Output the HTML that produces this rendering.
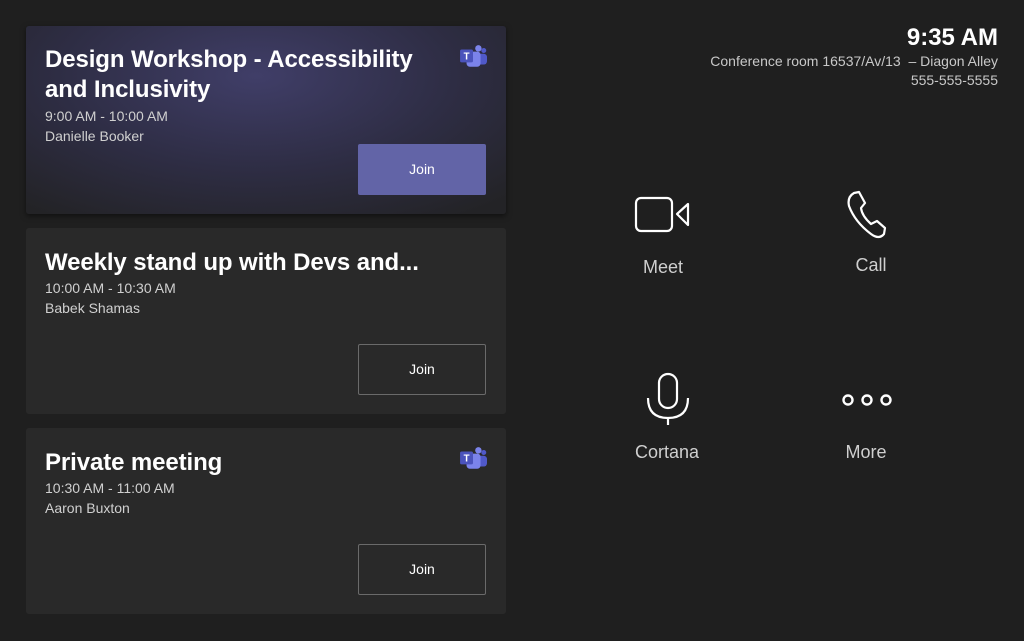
<!DOCTYPE html>
<html><head><style>
body{margin:0;width:1024px;height:641px;background:#1f1f1f;font-family:"Liberation Sans",sans-serif;color:#fff;position:relative;overflow:hidden}
.card{position:absolute;left:26px;width:480px;background:#292929;border-radius:3px}
.t{position:absolute;left:19px;font-weight:bold;font-size:24px;line-height:30px;letter-spacing:-0.1px}
.s{position:absolute;left:19px;font-size:14px;color:#d0d0d0;line-height:19px}
.btn{position:absolute;left:332px;width:128px;height:51px;border:1px solid #6a6a6a;border-radius:2px;box-sizing:border-box;font-size:14px;text-align:center;line-height:49px}
.ic{position:absolute}
.lbl{position:absolute;font-size:18px;color:#cfcfcf;text-align:center;width:120px}
.teams{position:absolute;left:433px;width:28px;height:26px}
</style></head><body>
<div class="card" style="top:26px;height:188px;background:radial-gradient(ellipse 360px 170px at 230px 50px,#403e68 0%,#2e2d44 55%,#232326 100%);box-shadow:0 2px 6px rgba(0,0,0,.5)">
 <div class="t" style="top:19px">Design Workshop - Accessibility<br>and Inclusivity</div>
 <div class="s" style="top:81px">9:00 AM - 10:00 AM</div>
 <div class="s" style="top:101px">Danielle Booker</div>
 <div class="btn" style="top:118px;background:#6264a7;border:none;line-height:51px">Join</div>
 <svg class="teams" style="top:18px" viewBox="0 0 26 24"><circle cx="18" cy="4" r="3" fill="#7b83eb"/><circle cx="23" cy="6" r="2.3" fill="#5059c9"/><rect x="16" y="9" width="10" height="10" rx="3" fill="#5059c9"/><rect x="7" y="7" width="13" height="14" rx="3" fill="#7b83eb"/><rect x="1" y="5" width="12" height="12" rx="1.5" fill="#4b53bc"/><text x="7" y="14.5" font-size="9" font-weight="bold" fill="#fff" text-anchor="middle" font-family="Liberation Sans">T</text></svg>
</div>
<div class="card" style="top:228px;height:186px">
 <div class="t" style="top:20px">Weekly stand up with Devs and...</div>
 <div class="s" style="top:51px">10:00 AM - 10:30 AM</div>
 <div class="s" style="top:71px">Babek Shamas</div>
 <div class="btn" style="top:116px">Join</div>
</div>
<div class="card" style="top:428px;height:186px">
 <div class="t" style="top:20px">Private meeting</div>
 <div class="s" style="top:51px">10:30 AM - 11:00 AM</div>
 <div class="s" style="top:71px">Aaron Buxton</div>
 <div class="btn" style="top:116px">Join</div>
 <svg class="teams" style="top:18px" viewBox="0 0 26 24"><circle cx="18" cy="4" r="3" fill="#7b83eb"/><circle cx="23" cy="6" r="2.3" fill="#5059c9"/><rect x="16" y="9" width="10" height="10" rx="3" fill="#5059c9"/><rect x="7" y="7" width="13" height="14" rx="3" fill="#7b83eb"/><rect x="1" y="5" width="12" height="12" rx="1.5" fill="#4b53bc"/><text x="7" y="14.5" font-size="9" font-weight="bold" fill="#fff" text-anchor="middle" font-family="Liberation Sans">T</text></svg>
</div>
<div style="position:absolute;right:26px;top:24px;text-align:right">
 <div style="font-size:24px;font-weight:bold;line-height:28px">9:35 AM</div>
 <div style="font-size:14px;color:#c8c8c8;line-height:19px">Conference room 16537/Av/13 &nbsp;– Diagon Alley</div>
 <div style="font-size:14px;color:#c8c8c8;line-height:19px">555-555-5555</div>
</div>
<svg class="ic" style="left:634px;top:194px" width="58" height="40" viewBox="0 0 58 40" fill="none" stroke="#fff" stroke-width="2.2"><rect x="2" y="4" width="36" height="33" rx="5"/><path d="M43 20 L54 10 V31 Z" stroke-linejoin="round"/></svg>
<div class="lbl" style="left:603px;top:257px">Meet</div>
<svg class="ic" style="left:845px;top:190px" width="42" height="50" viewBox="0 0 42 50" fill="none" stroke="#fff" stroke-width="2.2" stroke-linejoin="round"><path d="M9 3 L14 2 L20 13 L16 18 Q17 26 26 34 L32 31 L40 38 L39 44 Q34 50 26 44 Q10 32 4 16 Q2 7 9 3 Z"/></svg>
<div class="lbl" style="left:811px;top:255px">Call</div>
<svg class="ic" style="left:646px;top:372px" width="44" height="54" viewBox="0 0 44 54" fill="none" stroke="#fff" stroke-width="2.2"><rect x="13" y="2" width="18" height="34" rx="9"/><path d="M2 26 Q2 46 22 46 Q42 46 42 26 M22 46 V53"/></svg>
<div class="lbl" style="left:607px;top:442px">Cortana</div>
<svg class="ic" style="left:840px;top:392px" width="54" height="16" viewBox="0 0 54 16" fill="none" stroke="#fff" stroke-width="2.4"><circle cx="8" cy="8" r="4.5"/><circle cx="27" cy="8" r="4.5"/><circle cx="46" cy="8" r="4.5"/></svg>
<div class="lbl" style="left:806px;top:442px">More</div>
</body></html>
